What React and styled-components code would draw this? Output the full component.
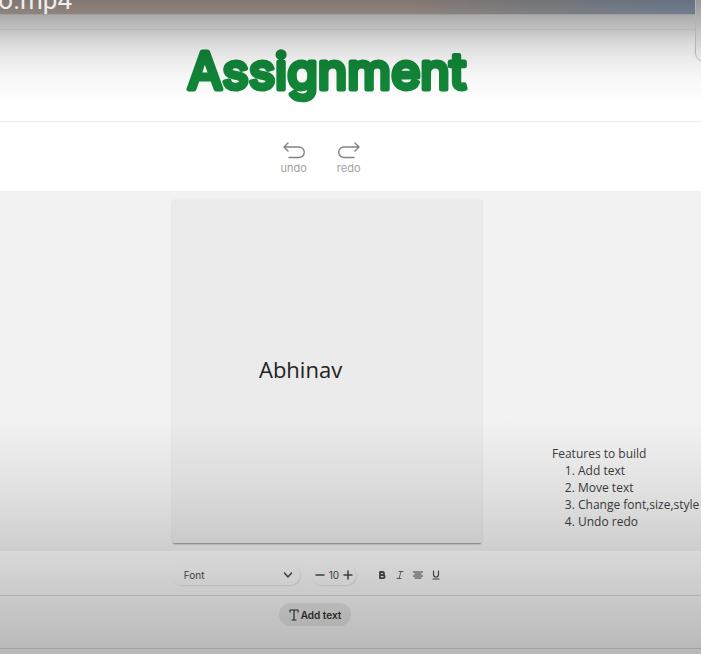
import React from 'react';
import styled, { createGlobalStyle } from 'styled-components';

const GlobalStyle = createGlobalStyle`
  *, *::before, *::after { box-sizing: border-box; }
  html, body { margin: 0; background: #b8b8b8; }
  body { font-family: Inter, "Liberation Sans", sans-serif; color: #222; }
  button, select { font: inherit; color: inherit; border: 0; background: none; padding: 0; margin: 0; }
`;

const Player = styled.main`
  position: relative;
  min-height: 100vh;
  overflow: hidden;
  display: flex;
  flex-direction: column;
  background: #fff;
`;

const Wallpaper = styled.div`
  height: 14px;
  background: linear-gradient(90deg, #d8c5bc 0%, #d8c5bc 58%, #bfc0c4 76%, #a6bcd8 100%);
`;

const TabStrip = styled.div`
  height: 16px;
  border-top: 1px solid #ececec;
  border-bottom: 1px solid #f1f1f1;
`;

const Header = styled.header`
  height: 92px;
  display: flex;
  justify-content: center;
  align-items: center;
  padding-right: 47px;
  border-bottom: 1px solid #ebebeb;
`;

const Title = styled.h1`
  margin: 0;
  display: flex;

  svg { overflow: visible; }

  text {
    font: 400 50px Inter, sans-serif;
    fill: #118738;
    stroke: #118738;
    stroke-width: 5px;
    stroke-linejoin: round;
  }
`;

const History = styled.nav`
  height: 70px;
  display: flex;
  justify-content: center;
  gap: 30px;
  padding: 19px 60px 0 0;
  border-bottom: 1px solid #ededed;
`;

const HistoryButton = styled.button`
  display: flex;
  flex-direction: column;
  align-items: center;
  height: 34px;
  font-size: 11px;
  line-height: 14px;
  color: #a2a2a2;
`;

const Workspace = styled.section`
  height: 359px;
  display: grid;
  grid-template-columns: minmax(0, 1fr) 310px minmax(0, 1fr);
  padding: 8px 47px 0 0;
  background: #f2f2f2;
`;

const Sheet = styled.div`
  grid-column: 2;
  position: relative;
  height: 343px;
  background: #ebebeb;
  border-radius: 2px;
  box-shadow: 0 2px 2px -1px rgba(0, 0, 0, 0.4), 0 0 2px rgba(0, 0, 0, 0.08);
`;

const CanvasText = styled.span`
  position: absolute;
  left: 87px;
  top: 154px;
  font: 400 22px/30px "Open Sans", sans-serif;
  color: #222;
`;

const Notes = styled.aside`
  align-self: end;
  padding: 0 0 21px 70px;
  font: 400 12px/17px "Open Sans", sans-serif;
  color: #3c3c3c;
  white-space: nowrap;

  p { margin: 0; }
  ol { margin: 0; padding-left: 26px; }
`;

const FormatBar = styled.div`
  height: 45px;
  display: flex;
  justify-content: center;
  align-items: center;
  gap: 12px;
  padding: 4px 87px 0 0;
  border-bottom: 1px solid #dedede;
  font-size: 10px;
  color: #4c4c4c;
`;

const FontPicker = styled.label`
  display: flex;
  align-items: center;
  width: 128px;
  height: 20px;
  padding: 0 6px 0 12px;
  border-radius: 10px;
  box-shadow: 1px 1px 2px rgba(0, 0, 0, 0.1);

  select { flex: 1; appearance: none; outline: 0; }
`;

const SizeStepper = styled.div`
  display: flex;
  align-items: center;
  gap: 3px;
  height: 20px;
  padding: 0 2px;
  border-radius: 10px;
  box-shadow: 1px 1px 2px rgba(0, 0, 0, 0.1);
`;

const IconButton = styled.button`
  display: flex;
`;

const StyleGroup = styled.div`
  display: flex;
  gap: 6px;
  padding-left: 8px;
`;

const Footer = styled.footer`
  height: 53px;
  display: flex;
  justify-content: center;
  padding: 7px 71px 0 0;
  border-bottom: 1px solid #dcdcdc;
`;

const AddTextButton = styled.button`
  display: flex;
  align-items: center;
  gap: 2px;
  height: 23px;
  padding: 0 10px;
  border-radius: 12px;
  background: #ececec;
  font-size: 10px;
  font-weight: 600;
  color: #333;
`;

const Shade = styled.div`
  position: absolute;
  inset: 0;
  pointer-events: none;
  background:
    linear-gradient(180deg, rgba(0,0,0,.4), rgba(0,0,0,.33) 15px, rgba(0,0,0,.24) 30px, rgba(0,0,0,.14) 44px, rgba(0,0,0,.08) 60px, rgba(0,0,0,.03) 77px, transparent 105px),
    linear-gradient(0deg, rgba(0,0,0,.28), rgba(0,0,0,.21) 55px, rgba(0,0,0,.15) 104px, rgba(0,0,0,.07) 165px, transparent 235px);
`;

const FileName = styled.div`
  position: absolute;
  left: 0;
  top: 0;
  width: 72px;
  height: 14px;
  display: flex;
  justify-content: flex-end;
  align-items: flex-end;
  font: 400 26px/28px Roboto, sans-serif;
  color: #eee;
  white-space: nowrap;
`;

const SidePanel = styled.div`
  position: absolute;
  right: -20px;
  top: -20px;
  width: 26px;
  height: 82px;
  border: 1px solid #b4b4b4;
  border-radius: 9px;
  background: linear-gradient(180deg, #999 20px, #ededed);
`;

const stroke = { fill: 'none', stroke: 'currentColor', strokeLinecap: 'round', strokeLinejoin: 'round' };

const UndoIcon = ({ flip }) => (
  <svg width="22" height="20" viewBox="0 0 22 20" aria-hidden="true" {...stroke} strokeWidth="1.4">
    <g transform={flip ? 'translate(22 0) scale(-1 1)' : undefined} stroke="#828282">
      <path d="M5 2 1 6l4 4M1 6h15a5 5 0 0 1 0 10.500H6" />
    </g>
  </svg>
);

const glyphs = {
  minus: <path d="M2 6h8" strokeWidth="1.500" />,
  plus: <path d="M2 6h8M6 2v8" strokeWidth="1.500" />,
  chevron: <path d="m2.500 4 3.500 4 3.500-4" strokeWidth="1.500" />,
  bold: <path d="M4 3h2.500a1.500 1.500 0 0 1 0 3H4h3a1.500 1.500 0 0 1 0 3.200H4Z" strokeWidth="1.800" />,
  italic: <path d="M5 2.500h4M3 9.500h4M7 2.500l-2 7" strokeWidth=".8" />,
  align: <path d="M1.500 3h9M3 5h6M1.500 7h9M3 9h6" strokeWidth="1.200" />,
  underline: <path d="M3.500 2v3.500a2.500 2.500 0 0 0 5 0V2M3 10h6" strokeWidth="1.200" />,
};

const Glyph = ({ name }) => (
  <svg width="12" height="12" viewBox="0 0 12 12" aria-hidden="true" {...stroke}>{glyphs[name]}</svg>
);

const TextIcon = () => (
  <svg width="10" height="12" viewBox="0 0 10 12" aria-hidden="true" {...stroke} strokeWidth="1.200">
    <path d="M1 3V1h8v2M5 1v10M3 11h4" />
  </svg>
);

const styleTools = [
  ['bold', 'Bold'],
  ['italic', 'Italic'],
  ['align', 'Align center'],
  ['underline', 'Underline'],
];

const features = ['Add text', 'Move text', 'Change font,size,style', 'Undo redo'];

export default function App() {
  return (
    <>
      <GlobalStyle />
      <Player>
        <Wallpaper />
        <TabStrip />
        <Header>
          <Title>
            <svg width="300" height="72" viewBox="0 0 300 72">
              <text x="150" y="49" textAnchor="middle">Assignment</text>
            </svg>
          </Title>
        </Header>
        <History aria-label="History">
          <HistoryButton type="button"><UndoIcon />undo</HistoryButton>
          <HistoryButton type="button"><UndoIcon flip />redo</HistoryButton>
        </History>
        <Workspace>
          <Sheet><CanvasText>Abhinav</CanvasText></Sheet>
          <Notes>
            <p>Features to build</p>
            <ol>{features.map((item) => <li key={item}>{item}</li>)}</ol>
          </Notes>
        </Workspace>
        <FormatBar>
          <FontPicker>
            <select aria-label="Font" defaultValue="Font"><option>Font</option></select>
            <Glyph name="chevron" />
          </FontPicker>
          <SizeStepper>
            <IconButton type="button" aria-label="Decrease size"><Glyph name="minus" /></IconButton>
            <output>10</output>
            <IconButton type="button" aria-label="Increase size"><Glyph name="plus" /></IconButton>
          </SizeStepper>
          <StyleGroup>
            {styleTools.map(([name, label]) => (
              <IconButton key={name} type="button" aria-label={label}><Glyph name={name} /></IconButton>
            ))}
          </StyleGroup>
        </FormatBar>
        <Footer>
          <AddTextButton type="button"><TextIcon />Add text</AddTextButton>
        </Footer>
        <Shade />
        <SidePanel />
        <FileName>o.mp4</FileName>
      </Player>
    </>
  );
}
